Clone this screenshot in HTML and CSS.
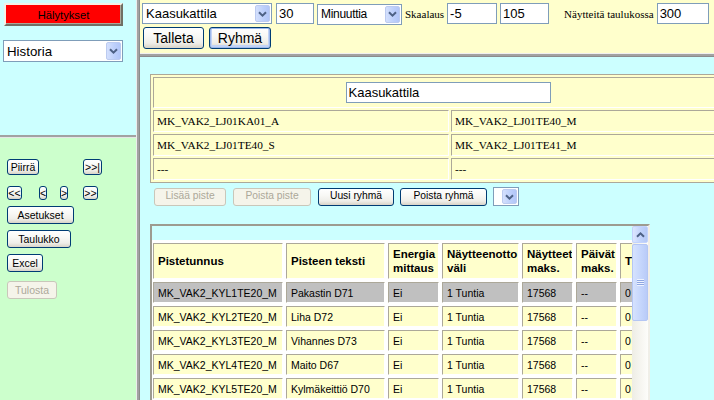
FILE: index.html
```html
<!DOCTYPE html>
<html lang="fi">
<head>
<meta charset="utf-8">
<title>Historia</title>
<link rel="stylesheet" href="styles.css">
</head>
<body>
<div class="app">
  <div class="leftcol">
    <div class="frame-nav">
      <button class="alarm">Hälytykset</button>
      <div class="xsel nav-sel">
        <span class="xsel-text">Historia</span>
        <span class="xsel-btn"><svg width="9" height="6" viewBox="0 0 9 6"><path d="M1 1.2 4.5 4.6 8 1.2"/></svg></span>
      </div>
    </div>
    <div class="hdiv"></div>
    <div class="frame-ctrl">
      <div class="navgrid">
        <button class="xbtn lbtn b-piirra">Piirrä</button>
        <button class="xbtn lbtn b-end">&gt;&gt;|</button>
        <button class="xbtn lbtn b-arrow b-dbl">&lt;&lt;</button>
        <button class="xbtn lbtn b-arrow b-one">&lt;</button>
        <button class="xbtn lbtn b-arrow b-one">&gt;</button>
        <button class="xbtn lbtn b-arrow b-dbl">&gt;&gt;</button>
      </div>
      <button class="xbtn lbtn b-blk b-aset">Asetukset</button>
      <button class="xbtn lbtn b-blk b-taul">Taulukko</button>
      <button class="xbtn lbtn b-blk b-excel">Excel</button>
      <button class="xbtn lbtn b-blk b-tulosta" disabled>Tulosta</button>
    </div>
  </div>
  <div class="vdiv"></div>
  <div class="rightcol">
    <div class="frame-top">
      <div class="toolbar">
        <div class="xsel sel-group">
          <span class="xsel-text">Kaasukattila</span>
          <span class="xsel-btn"><svg width="9" height="6" viewBox="0 0 9 6"><path d="M1 1.2 4.5 4.6 8 1.2"/></svg></span>
        </div>
        <input class="xin in-count" type="text" value="30">
        <div class="xsel sel-unit">
          <span class="xsel-text">Minuuttia</span>
          <span class="xsel-btn"><svg width="9" height="6" viewBox="0 0 9 6"><path d="M1 1.2 4.5 4.6 8 1.2"/></svg></span>
        </div>
        <span class="lbl lbl-scale">Skaalaus</span>
        <input class="xin in-min" type="text" value="-5">
        <input class="xin in-max" type="text" value="105">
        <span class="lbl lbl-samples">Näytteitä taulukossa</span>
        <input class="xin in-samples" type="text" value="300">
      </div>
      <div class="toolbar2">
        <button class="xbtn tbtn b-save">Talleta</button>
        <button class="xbtn tbtn b-group is-default">Ryhmä</button>
      </div>
    </div>
    <div class="hdiv2"></div>
    <div class="frame-main">
      <table class="grp-table">
        <tr>
          <td colspan="2" class="grp-name"><input class="xin in-name" type="text" value="Kaasukattila"></td>
        </tr>
        <tr><td>MK_VAK2_LJ01KA01_A</td><td>MK_VAK2_LJ01TE40_M</td></tr>
        <tr><td>MK_VAK2_LJ01TE40_S</td><td>MK_VAK2_LJ01TE41_M</td></tr>
        <tr><td>---</td><td>---</td></tr>
      </table>
      <div class="grp-actions">
        <button class="xbtn abtn b-add" disabled>Lisää piste</button>
        <button class="xbtn abtn b-del" disabled>Poista piste</button>
        <button class="xbtn abtn b-new">Uusi ryhmä</button>
        <button class="xbtn abtn b-delgrp">Poista ryhmä</button>
        <div class="xsel sel-empty">
          <span class="xsel-text"></span>
          <span class="xsel-btn"><svg width="9" height="6" viewBox="0 0 9 6"><path d="M1 1.2 4.5 4.6 8 1.2"/></svg></span>
        </div>
      </div>
      <div class="data-panel">
        <div class="data-scroll">
          <table class="data-table">
            <tr>
              <th class="c1">Pistetunnus</th>
              <th class="c2">Pisteen teksti</th>
              <th class="c3">Energia mittaus</th>
              <th class="c4">Näytteenotto väli</th>
              <th class="c5">Näytteet maks.</th>
              <th class="c6">Päivät maks.</th>
              <th class="c7">Tila</th>
            </tr>
            <tr class="sel">
              <td>MK_VAK2_KYL1TE20_M</td><td>Pakastin D71</td><td>Ei</td><td>1 Tuntia</td><td>17568</td><td>--</td><td>0</td>
            </tr>
            <tr>
              <td>MK_VAK2_KYL2TE20_M</td><td>Liha D72</td><td>Ei</td><td>1 Tuntia</td><td>17568</td><td>--</td><td>0</td>
            </tr>
            <tr>
              <td>MK_VAK2_KYL3TE20_M</td><td>Vihannes D73</td><td>Ei</td><td>1 Tuntia</td><td>17568</td><td>--</td><td>0</td>
            </tr>
            <tr>
              <td>MK_VAK2_KYL4TE20_M</td><td>Maito D67</td><td>Ei</td><td>1 Tuntia</td><td>17568</td><td>--</td><td>0</td>
            </tr>
            <tr>
              <td>MK_VAK2_KYL5TE20_M</td><td>Kylmäkeittiö D70</td><td>Ei</td><td>1 Tuntia</td><td>17568</td><td>--</td><td>0</td>
            </tr>
            <tr>
              <td>MK_VAK2_KYL6TE20_M</td><td>Juomat D74</td><td>Ei</td><td>1 Tuntia</td><td>17568</td><td>--</td><td>0</td>
            </tr>
          </table>
        </div>
        <div class="vscroll">
          <div class="sb-up"><svg width="9" height="6" viewBox="0 0 9 6"><path d="M1 4.8 4.5 1.4 8 4.8"/></svg></div>
          <div class="sb-thumb"><span class="grip"></span></div>
        </div>
      </div>
    </div>
  </div>
</div>
</body>
</html>
```

FILE: styles.css
```css
html, body {
  margin: 0;
  padding: 0;
}
body {
  width: 714px;
  height: 400px;
  overflow: hidden;
  font-family: "Liberation Sans", Arial, sans-serif;
  color: #000;
}

/* ---------- XP style controls (base) ---------- */
.xbtn {
  display: block;
  box-sizing: border-box;
  padding: 0;
  margin: 0;
  border: 1px solid #003c74;
  border-radius: 3px;
  background: linear-gradient(#ffffff 0%, #f8f8f5 40%, #efeee9 75%, #d8d3c7 100%);
  color: #000;
  font-family: "Liberation Sans", Arial, sans-serif;
  line-height: 1;
  white-space: nowrap;
  overflow: hidden;
}
.xbtn:disabled {
  border-color: #c9c7ba;
  color: #aca899;
  background: #f5f4ea;
}
.xbtn.is-default {
  box-shadow: inset 0 0 0 1px #9db9eb, inset 0 -1px 0 2px #c2d3f6;
}
.xsel {
  display: flex;
  box-sizing: border-box;
  border: 1px solid #7f9db9;
  background: #fff;
  color: #000;
  font-family: "Liberation Sans", Arial, sans-serif;
}
.xsel-text {
  flex: 1;
  padding-left: 3px;
  align-self: center;
  white-space: nowrap;
  overflow: hidden;
}
.xsel-btn {
  flex: none;
  width: 15px;
  margin: 1px;
  box-sizing: border-box;
  border: 1px solid #bccbf0;
  border-radius: 2px;
  background: linear-gradient(to right, #d4e0fd, #bccffb 60%, #b2c6f8);
  display: flex;
  align-items: center;
  justify-content: center;
}
.xsel-btn svg path,
.sb-up svg path {
  fill: none;
  stroke: #4d6185;
  stroke-width: 2;
}
.xin {
  box-sizing: border-box;
  height: 21px;
  border: 1px solid #7f9db9;
  background: #fff;
  margin: 0;
  padding: 0 0 0 2px;
  font-family: "Liberation Sans", Arial, sans-serif;
  font-size: 13px;
  color: #000;
  outline: none;
}

.app {
  display: grid;
  grid-template-columns: 136px 4px 1fr;
  height: 400px;
}

/* ---------- frame dividers ---------- */
.vdiv {
  background: linear-gradient(to right, #ececec 0 1px, #a2a2a2 1px 3px, #8c8c8c 3px);
}
.hdiv {
  height: 3px;
  background: linear-gradient(#a2a2a2 0 2px, #e6e6e6 2px);
}
.hdiv2 {
  height: 4px;
  background: linear-gradient(#f0f0f0 0 1px, #a2a2a2 1px 3px, #8c8c8c 3px);
}

/* ---------- left column ---------- */
.leftcol {
  display: flex;
  flex-direction: column;
  min-height: 0;
}
.frame-nav {
  height: 135px;
  background: #ccffff;
  padding-top: 3px;
  box-sizing: border-box;
}
.alarm {
  display: block;
  margin-left: 4px;
  width: 119px;
  height: 23px;
  box-sizing: border-box;
  background: #ff0000;
  border: 2px solid;
  border-color: #f4f2e8 #716f64 #716f64 #f4f2e8;
  box-shadow: inset -1px -1px 0 #aca899;
  font-family: "Liberation Sans", Arial, sans-serif;
  font-size: 11.2px;
  color: #000;
  padding: 0;
}
.nav-sel {
  margin: 14px 0 0 3px;
  width: 120px;
  height: 22px;
  font-size: 13.3px;
}
.frame-ctrl {
  flex: 1;
  background: #ccffcc;
  padding: 21px 0 0 7px;
  display: flex;
  flex-direction: column;
  align-items: flex-start;
}
.navgrid {
  display: grid;
  grid-template-columns: 32px 21px 23px auto;
  row-gap: 11px;
  align-items: start;
}
.lbtn {
  font-size: 10.5px;
}
.b-piirra { width: 32px; height: 16px; grid-column: 1; }
.b-end { width: 19px; height: 16px; grid-column: 4; }
.b-arrow { height: 14px; }
.b-dbl { width: 15px; }
.b-one { width: 8px; }
.b-blk { height: 18px; margin-top: 6px; flex: none; }
.b-aset { width: 67px; }
.b-taul { width: 64px; }
.b-excel { width: 36px; }
.b-tulosta { width: 50px; margin-top: 9px; }

/* ---------- top right frame ---------- */
.rightcol {
  display: flex;
  flex-direction: column;
  min-width: 0;
  overflow: hidden;
}
.frame-top {
  height: 53px;
  background: #ffffcc;
  padding: 3px 0 0 2px;
  box-sizing: border-box;
}
.toolbar {
  display: flex;
  align-items: baseline;
  white-space: nowrap;
}
.sel-group {
  width: 130px;
  height: 21px;
  font-size: 13px;
}
.in-count { width: 38px; margin-left: 4px; }
.sel-unit {
  width: 85px;
  height: 21px;
  margin-left: 3px;
  font-size: 12px;
  letter-spacing: -0.3px;
}
.lbl {
  font-family: "Liberation Serif", "Times New Roman", serif;
  font-size: 11px;
}
.lbl-scale { margin-left: 3px; }
.in-min { width: 50px; margin-left: 3px; }
.in-max { width: 49px; margin-left: 3px; }
.lbl-samples { margin-left: 15px; }
.in-samples { width: 52px; margin-left: 3px; }
.toolbar2 {
  display: flex;
  margin-top: 2px;
}
.tbtn {
  height: 22px;
  font-size: 14px;
}
.b-save { width: 61px; margin-left: 1px; }
.b-group { width: 62px; margin-left: 5px; }

/* ---------- main frame ---------- */
.frame-main {
  flex: 1;
  min-height: 0;
  background: #ccffff;
  padding: 17px 0 0 10px;
  overflow: hidden;
}
.grp-table {
  width: 600px;
  border-spacing: 2px;
  border: 1px solid #aca899;
  background: #ffffcc;
  table-layout: fixed;
}
.grp-table td {
  height: 20px;
  padding: 0 3px;
  border: 1px solid;
  border-color: #aca899 #ffffff #ffffff #aca899;
  background: #ffffcc;
  font-family: "Liberation Serif", "Times New Roman", serif;
  font-size: 11.3px;
  white-space: nowrap;
}
.grp-table td.grp-name {
  height: 29px;
  text-align: center;
}
.in-name {
  width: 205px;
  display: inline-block;
  vertical-align: middle;
  margin-left: -4px;
}
.grp-actions {
  display: flex;
  align-items: center;
  margin: 4px 0 0 4px;
}
.abtn {
  height: 18px;
  font-size: 10.3px;
}
.b-add { width: 72px; }
.b-del { width: 78px; margin-left: 7px; }
.b-new { width: 76px; margin-left: 7px; }
.b-delgrp { width: 87px; margin-left: 6px; }
.sel-empty {
  width: 26px;
  height: 19px;
  margin-left: 6px;
}

.data-panel {
  display: flex;
  margin-top: 18px;
  width: 500px;
  height: 190px;
  box-sizing: border-box;
  border: 2px solid;
  border-color: #9d9b90 #f0efe8 #f0efe8 #9d9b90;
  box-shadow: inset 1px 1px 0 #716f64;
}
.data-scroll {
  flex: 1;
  min-width: 0;
  overflow: hidden;
  background: #ccffff;
  padding-top: 14px;
}
.data-table {
  margin-left: -2px;
  border-spacing: 3px;
  background: #ffffff;
  table-layout: fixed;
  width: 513px;
}
.data-table th,
.data-table td {
  border: 1px solid;
  border-color: #aca899 #ffffff #ffffff #aca899;
  background: #ffffcc;
  padding: 0 2px 0 4px;
  text-align: left;
  vertical-align: middle;
  white-space: nowrap;
  overflow: hidden;
}
.data-table th {
  height: 34px;
  font-size: 11.5px;
  font-weight: bold;
  line-height: 14px;
  white-space: normal;
}
.data-table td {
  height: 19px;
  font-size: 10.5px;
}
.data-table tr.sel td {
  background: #c0c0c0;
}
.c1 { width: 122px; }
.c2 { width: 91px; }
.c3 { width: 43px; }
.c4 { width: 69px; }
.c5 { width: 43px; }
.c6 { width: 33px; }
.c7 { width: 32px; }

.vscroll {
  flex: none;
  width: 16px;
  background: linear-gradient(to right, #eeede5, #fdfdfa);
  display: flex;
  flex-direction: column;
}
.sb-up {
  height: 17px;
  box-sizing: border-box;
  border: 1px solid #c3d3fd;
  border-radius: 2px;
  background: linear-gradient(to right, #dce6fe, #c1d3fb 55%, #b4c8f6);
  display: flex;
  align-items: center;
  justify-content: center;
}
.sb-thumb {
  margin-top: 1px;
  height: 77px;
  box-sizing: border-box;
  border: 1px solid #b4c6f4;
  border-radius: 2px;
  background: linear-gradient(to right, #d6e2fe, #c5d6fc 55%, #b9cbf8);
  display: flex;
  align-items: center;
  justify-content: center;
}
.grip {
  width: 7px;
  height: 7px;
  background: repeating-linear-gradient(#eef3ff 0 1px, #8fa7e2 1px 2px);
}
```
